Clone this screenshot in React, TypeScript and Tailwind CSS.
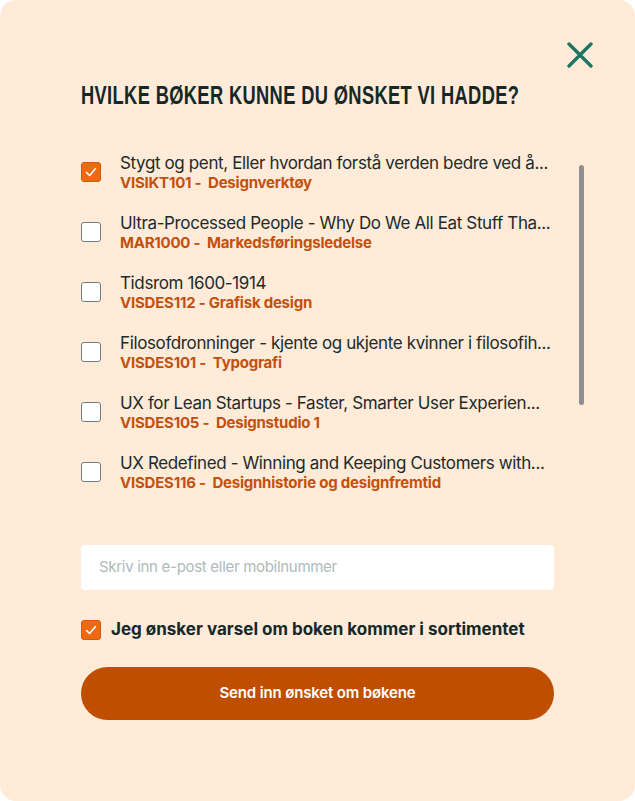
import React from "react";

const items = [
  { title: "Stygt og pent, Eller hvordan forstå verden bedre ved å...", code: "VISIKT101 -  Designverktøy", checked: true },
  { title: "Ultra-Processed People - Why Do We All Eat Stuff Tha...", code: "MAR1000 -  Markedsføringsledelse", checked: false },
  { title: "Tidsrom 1600-1914", code: "VISDES112 - Grafisk design", checked: false },
  { title: "Filosofdronninger - kjente og ukjente kvinner i filosofih...", code: "VISDES101 -  Typografi", checked: false },
  { title: "UX for Lean Startups - Faster, Smarter User Experien...", code: "VISDES105 -  Designstudio 1", checked: false },
  { title: "UX Redefined - Winning and Keeping Customers with...", code: "VISDES116 -  Designhistorie og designfremtid", checked: false },
];

function Check({ checked }: { checked: boolean }) {
  if (checked) {
    return (
      <div className="w-[20px] h-[20px] shrink-0 rounded-[3px] bg-[#EE6A12] border border-[#D85A08] flex items-center justify-center">
        <svg width="14" height="14" viewBox="0 0 14 14" fill="none">
          <path d="M2.5 7.5 L5.6 10.5 L11.5 3.5" stroke="white" strokeWidth="1.6" strokeLinecap="round" strokeLinejoin="round" />
        </svg>
      </div>
    );
  }
  return <div className="w-[20px] h-[20px] shrink-0 rounded-[3px] bg-white border-[1.5px] border-[#6E7C7C]" />;
}

export default function App() {
  return (
    <div className="w-[635px] h-[801px] bg-white overflow-hidden">
      <div className="relative w-full h-full rounded-[16px] bg-[#FFEBD8] flex flex-col px-[81px]" style={{ fontFamily: "Inter, 'Liberation Sans', sans-serif" }}>
        <div className="flex justify-end pt-[42px] -mr-[39px]">
          <svg width="26" height="26" viewBox="0 0 26 26" fill="none">
            <path d="M2 2 L24 24 M24 2 L2 24" stroke="#1E7563" strokeWidth="3.4" strokeLinecap="round" />
          </svg>
        </div>
        <h1 className="mt-[12px] h-[30px] whitespace-nowrap">
          <span
            className="inline-block origin-left scale-x-[0.731] text-[25px] leading-[30px] font-bold text-[#14282A] tracking-[0.02em]"
            style={{ fontFamily: "'Liberation Sans', Arial, sans-serif" }}
          >
            HVILKE BØKER KUNNE DU ØNSKET VI HADDE?
          </span>
        </h1>
        <div className="relative mt-[32px] flex flex-col">
          {items.map((it) => (
            <div key={it.code} className="h-[60px] flex items-center gap-[19px]">
              <Check checked={it.checked} />
              <div className="flex flex-col w-[440px] min-w-0">
                <div className="truncate text-[17px] leading-[21px] tracking-[-0.022em] text-[#1C2A2B]">{it.title}</div>
                <div className="whitespace-pre text-[15px] leading-[18px] font-bold tracking-[-0.015em] text-[#C4500D]">{it.code}</div>
              </div>
            </div>
          ))}
          <div className="absolute right-[-30px] top-[23px] w-[5px] h-[240px] rounded-full bg-[#8E8E8E]" />
        </div>
        <div className="mt-[43px] h-[45px] rounded-[4px] bg-white flex items-center pl-[18px]">
          <span className="text-[15px] tracking-[-0.02em] text-[#AEBABA]">Skriv inn e-post eller mobilnummer</span>
        </div>
        <div className="mt-[27px] flex items-center gap-[10px]">
          <Check checked={true} />
          <span className="text-[17px] font-bold tracking-[0em] text-[#14282A]">Jeg ønsker varsel om boken kommer i sortimentet</span>
        </div>
        <button className="mt-[24px] h-[53px] rounded-full bg-[#C04E00] text-white text-[15px] font-semibold tracking-[-0.01em] flex items-center justify-center">
          Send inn ønsket om bøkene
        </button>
      </div>
    </div>
  );
}
